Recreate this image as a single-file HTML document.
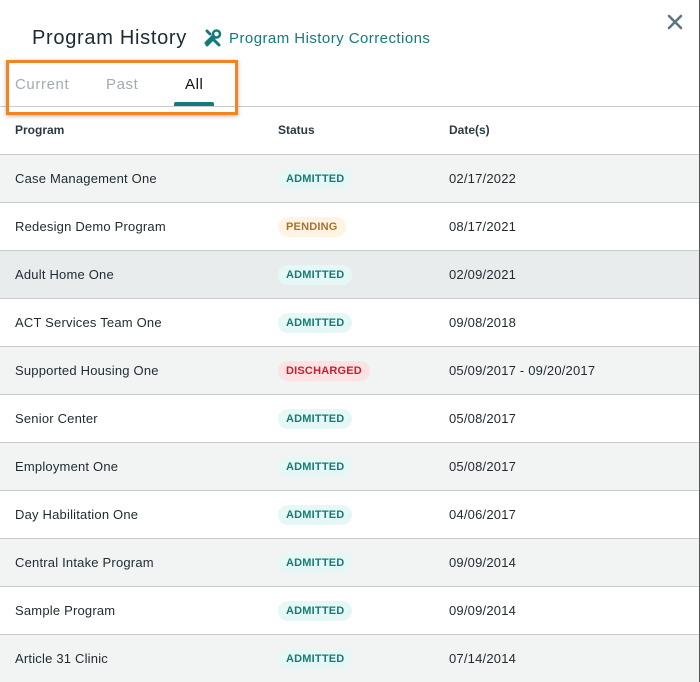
<!DOCTYPE html>
<html><head><style>
*{margin:0;padding:0;box-sizing:border-box}
body{width:700px;height:682px;overflow:hidden;background:#fff;font-family:"Liberation Sans",sans-serif;position:relative;color:#1f2a30}
.title{position:absolute;left:32px;top:27px;font-size:20px;color:#1c2a33;letter-spacing:.7px}
.corr{position:absolute;left:204px;top:29px;font-size:15px;color:#137b7a;display:flex;align-items:center;gap:7px;letter-spacing:.45px}
.close{position:absolute;left:666px;top:13px}
.tab{position:absolute;top:76px;font-size:15px;color:#a4abb0;letter-spacing:.6px}
.ul{position:absolute;left:174px;top:102px;width:40px;height:4px;background:#137b7a;border-radius:2px 2px 0 0}
.box{position:absolute;left:6px;top:60px;width:232px;height:55px;border:3px solid #f5841f;box-shadow:0 1px 4px rgba(0,0,0,.3)}
.hline{position:absolute;left:0;top:106px;width:700px;height:1px;background:#c8cccd}
.th{position:absolute;top:123px;font-size:12px;font-weight:bold;color:#2b3a42}
.row{position:absolute;left:0;width:699px;height:48px;border-top:1px solid #c8cccd;font-size:13px;color:#1f2a30;letter-spacing:.2px}
.row span{position:absolute;top:16px}
.b{position:absolute;left:278px;top:14px;height:20px;border-radius:10px;font-size:11px;font-weight:bold;line-height:20px;padding:0 8px;letter-spacing:.2px}
.a{background:#e5f8f6;color:#197a74}
.p{background:#fff3e3;color:#a8732f}
.d{background:#fbe3e5;color:#c7202c}
.edge{position:absolute;right:0;top:0;width:1px;height:682px;background:#555}
</style></head><body>
<div class="title">Program History</div>
<div class="corr"><svg width="18" height="18" viewBox="0 0 18 18"><path d="M2 14l7-7M3 16l7-7" stroke="#137b7a" stroke-width="3" stroke-linecap="round"/><circle cx="12.5" cy="5" r="3.5" fill="none" stroke="#137b7a" stroke-width="2.5"/><path d="M3 2l3 3M10 11l5 5" stroke="#137b7a" stroke-width="3" stroke-linecap="round"/></svg>Program History Corrections</div>
<svg class="close" width="18" height="18" viewBox="0 0 18 18"><path d="M3 3l12 12M15 3L3 15" stroke="#5f7480" stroke-width="2.6" stroke-linecap="round"/></svg>
<div class="tab" style="left:15px">Current</div>
<div class="tab" style="left:106px">Past</div>
<div class="tab" style="left:185px;color:#111">All</div>
<div class="ul"></div>
<div class="hline"></div>
<div class="box"></div>
<div class="th" style="left:15px">Program</div>
<div class="th" style="left:278px">Status</div>
<div class="th" style="left:449px">Date(s)</div>
<div class="row" style="top:154px;background:#f2f3f3"><span style="left:15px">Case Management One</span><div class="b a">ADMITTED</div><span style="left:449px">02/17/2022</span></div>
<div class="row" style="top:202px"><span style="left:15px">Redesign Demo Program</span><div class="b p">PENDING</div><span style="left:449px">08/17/2021</span></div>
<div class="row" style="top:250px;background:#e9eced"><span style="left:15px">Adult Home One</span><div class="b a">ADMITTED</div><span style="left:449px">02/09/2021</span></div>
<div class="row" style="top:298px"><span style="left:15px">ACT Services Team One</span><div class="b a">ADMITTED</div><span style="left:449px">09/08/2018</span></div>
<div class="row" style="top:346px;background:#f2f3f3"><span style="left:15px">Supported Housing One</span><div class="b d">DISCHARGED</div><span style="left:449px">05/09/2017 - 09/20/2017</span></div>
<div class="row" style="top:394px"><span style="left:15px">Senior Center</span><div class="b a">ADMITTED</div><span style="left:449px">05/08/2017</span></div>
<div class="row" style="top:442px;background:#f2f3f3"><span style="left:15px">Employment One</span><div class="b a">ADMITTED</div><span style="left:449px">05/08/2017</span></div>
<div class="row" style="top:490px"><span style="left:15px">Day Habilitation One</span><div class="b a">ADMITTED</div><span style="left:449px">04/06/2017</span></div>
<div class="row" style="top:538px;background:#f2f3f3"><span style="left:15px">Central Intake Program</span><div class="b a">ADMITTED</div><span style="left:449px">09/09/2014</span></div>
<div class="row" style="top:586px"><span style="left:15px">Sample Program</span><div class="b a">ADMITTED</div><span style="left:449px">09/09/2014</span></div>
<div class="row" style="top:634px;background:#f2f3f3"><span style="left:15px">Article 31 Clinic</span><div class="b a">ADMITTED</div><span style="left:449px">07/14/2014</span></div>
<div class="edge"></div>
</body></html>
